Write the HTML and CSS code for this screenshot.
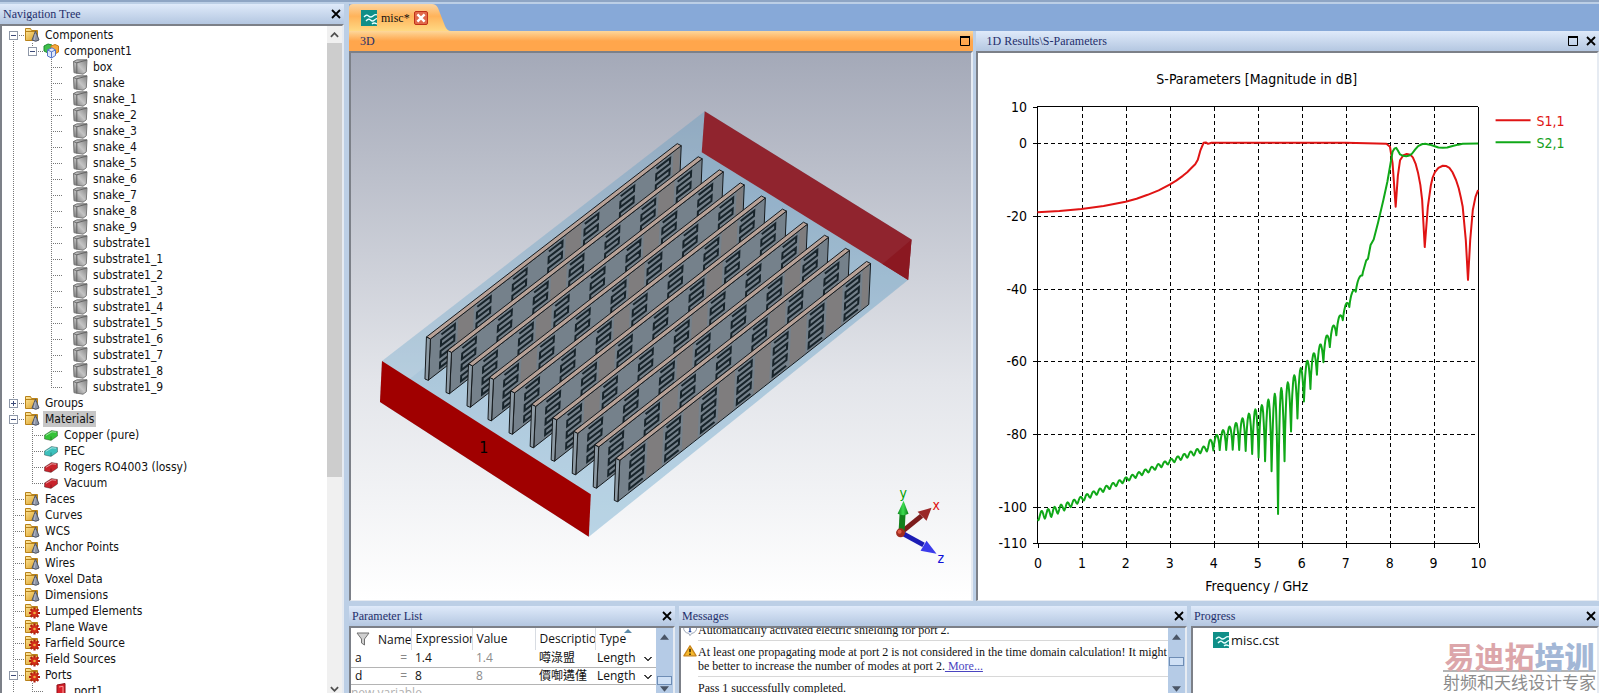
FILE: index.html
```html
<!DOCTYPE html>
<html lang="en">
  <head>
    <meta charset="UTF-8" />
    <meta name="viewport" content="width=device-width, initial-scale=1.0" />
    <title>misc</title>
    <link rel="stylesheet" href="styles.css">
  </head>
  <body>
    <svg class="defs" aria-hidden="true">
      <defs>
        <linearGradient id="gFolder" x1="0" y1="0" x2="1" y2="1">
          <stop offset="0" stop-color="#ffe9a0" />
          <stop offset="1" stop-color="#d99a1c" />
        </linearGradient>
        <linearGradient id="gCube" x1="0" y1="1" x2="1" y2="0">
          <stop offset="0" stop-color="#6e6e6e" />
          <stop offset="0.5" stop-color="#c4c4c4" />
          <stop offset="1" stop-color="#808080" />
        </linearGradient>
        <linearGradient id="gGreen" x1="0" x2="1">
          <stop offset="0" stop-color="#0d8a1e" />
          <stop offset="0.5" stop-color="#3cdc50" />
          <stop offset="1" stop-color="#0a7a18" />
        </linearGradient>
        <symbol id="folder" viewBox="0 0 16 16">
          <path d="M1.500 13.500V1.500h5l1 2h6v10z" fill="url(#gFolder)" stroke="#b8821a" />
          <path d="M2 4.500h11" stroke="#b8821a" />
        </symbol>
        <symbol id="geo" viewBox="0 0 16 16">
          <use href="#folder" />
          <path d="M11.500 4L15 13Q12 15.500 8 13z" fill="#8b93a5" stroke="#4f5565" />
          <path d="M11.300 7l-1 6" stroke="#b5bac8" />
        </symbol>
        <symbol id="src" viewBox="0 0 16 16">
          <use href="#folder" />
          <g stroke="#b01c10" stroke-width="2.200">
            <path d="M10.500 4.500v11M5 10h11M6.600 6.100l7.800 7.800M14.400 6.100l-7.800 7.800" />
          </g>
          <circle cx="10.500" cy="10" r="3.400" fill="#d22c18" />
          <circle cx="10.500" cy="10" r="1.300" fill="#f0b040" />
        </symbol>
        <symbol id="cube" viewBox="0 0 16 16">
          <path d="M1.500 2.500L5 .8h10l-.7 12-3.300 2.400-9-1.500z" fill="url(#gCube)" stroke="#7a7a7a" />
          <path d="M1.500 2.500l3.300 1.300L15 1M4.800 3.800v10.700" fill="none" stroke="#666" />
        </symbol>
        <symbol id="comp" viewBox="0 0 16 16">
          <path d="M1 3l4-2 4 1v6l-4 2-4-2z" fill="#3fbf4a" stroke="#1d8a30" />
          <path d="M8 3l4-1.500L15.500 3v6L12 11 8 9.500z" fill="#f5a83a" stroke="#c87a18" />
          <path d="M4.500 7L9 4.800 12.500 7v5.500L8.500 15 4.500 13z" fill="#dfe8fa" stroke="#5575c8" />
          <path d="M4.500 7l4 1.800 4-1.800M8.500 8.800V15" fill="none" stroke="#5575c8" />
        </symbol>
        <symbol id="brick" viewBox="0 0 16 16">
          <path d="M1.500 8L8.500 3.500 14.500 4.500v4.500L8 13.500 1.500 12z" fill="currentColor" stroke="rgba(0,0,0,.3)" />
          <path d="M3 8.300L9 4.800l4 .4" fill="none" stroke="rgba(255,255,255,.55)" />
          <path d="M8 9.500V13" stroke="rgba(0,0,0,.3)" />
        </symbol>
        <symbol id="port" viewBox="0 0 16 16">
          <path d="M4 2l8-1.500V14L4 16z" fill="#d8202a" stroke="#8e1018" />
          <path d="M6 4l4-.7V12" fill="none" stroke="#ff9c98" />
        </symbol>
        <symbol id="wave" viewBox="0 0 16 16">
          <path d="M0 0h16v16H0z" fill="#0f8f88" />
          <path d="M3 7q2.500-3 4.500-1t4.500 0 4-1M5 11q2.500-3 4.500-1t4 0 3-1M11 14q2-2 5 0" fill="none" stroke="#e8ffff" stroke-width="1.300" />
        </symbol>
        <symbol id="close" viewBox="0 0 10 10">
          <path d="M1 1l8 8M9 1L1 9" stroke="#000" stroke-width="1.800" />
        </symbol>
        <symbol id="max" viewBox="0 0 10 10">
          <path d="M.5.500h9v9h-9z" fill="none" stroke="#000" />
          <path d="M0 1h10" stroke="#000" stroke-width="2" />
        </symbol>
      </defs>
    </svg>

    <div class="app">
      <section class="panel nav">
        <header class="bar">
          <h2>Navigation Tree</h2>
          <button class="ctl" aria-label="Close"><svg><use href="#close" /></svg></button>
        </header>
        <div class="body nav-body">
          <ul class="tree" id="tree"></ul>
          <div class="scroll gray">
            <button aria-label="Scroll up"><svg viewBox="0 0 10 6"><path d="M1 5l4-4 4 4" /></svg></button>
            <span class="thumb"></span>
            <button aria-label="Scroll down"><svg viewBox="0 0 10 6"><path d="M1 1l4 4 4-4" /></svg></button>
          </div>
        </div>
      </section>

      <main class="work">
        <div class="tabs">
          <div class="tab">
            <svg class="ic"><use href="#wave" /></svg>
            <span>misc*</span>
            <button class="tab-close" aria-label="Close misc"><svg viewBox="0 0 10 10"><path d="M2 2l6 6M8 2L2 8" /></svg></button>
          </div>
        </div>

        <div class="views">
          <section class="panel">
            <header class="bar active">
              <h2>3D</h2>
              <button class="ctl" aria-label="Maximize"><svg><use href="#max" /></svg></button>
            </header>
            <div class="body view3d">
              <svg id="scene" viewBox="351 53 620 547">
                <path fill="#3e91c0" fill-opacity=".27" d="M705 111L912 239.500 908.600 280 589 537 380 402 382 361z" />
                <path fill="#3e91c0" fill-opacity=".08" d="M702 152L908 280 589 537 380 402z" />
                <path fill="#90242e" d="M705 111L912 239.500 908.600 280 702 152z" />
                <path fill="#8b1821" d="M912 239.500L908.600 280 883 264z" />
                <g id="slabs"></g>
                <path fill="#a00000" d="M382 361L591 494.500 589 537 380 402z" />
                <text class="port-no" x="479" y="453">1</text>
                <g class="triad">
                  <path d="M901 533L922 516" stroke="#7c1c1c" stroke-width="5" />
                  <path d="M932 508l-5 13-9-9z" fill="#9a2828" />
                  <path d="M902 533l22 12" stroke="#1c1cb4" stroke-width="5" />
                  <path d="M937 554l-16-3 6-10z" fill="#3b3bea" />
                  <path d="M902 532l1-18" stroke="#12801c" stroke-width="6" />
                  <path d="M904 501l5 13q-5 3-11 0z" fill="url(#gGreen)" />
                  <circle cx="901" cy="533" r="4.500" fill="#a02c20" />
                  <circle cx="900" cy="532" r="2" fill="#e05c48" />
                  <text x="900" y="498" fill="#00a000">y</text>
                  <text x="933" y="510" fill="#e01010">x</text>
                  <text x="938" y="563" fill="#1010d8">z</text>
                </g>
              </svg>
            </div>
          </section>

          <section class="panel">
            <header class="bar">
              <h2>1D Results\S-Parameters</h2>
              <button class="ctl" aria-label="Maximize"><svg><use href="#max" /></svg></button>
              <button class="ctl" aria-label="Close"><svg><use href="#close" /></svg></button>
            </header>
            <div class="body">
              <svg id="chart" viewBox="978 53 620 547">
                <text class="mid" x="1257" y="84">S-Parameters [Magnitude in dB]</text>
                <g id="grid"></g>
                <path id="s11" class="curve red" />
                <path id="s21" class="curve green" />
                <text class="mid" x="1257" y="591">Frequency / GHz</text>
                <path class="curve red" d="M1496 120h35" />
                <text x="1537" y="126" fill="#e01414">S1,1</text>
                <path class="curve green" d="M1496 142h35" />
                <text x="1537" y="148" fill="#14a01c">S2,1</text>
              </svg>
            </div>
          </section>
        </div>

        <div class="docks">
          <section class="panel params">
            <header class="bar">
              <h2>Parameter List</h2>
              <button class="ctl" aria-label="Close"><svg><use href="#close" /></svg></button>
            </header>
            <div class="body row-body">
              <table>
                <thead>
                  <tr>
                    <th class="c-name"><svg class="ic" viewBox="0 0 16 16"><path d="M2 2h12L9.500 8v6l-3-2V8z" fill="#d0d0d0" stroke="#707070" /></svg>Name</th>
                    <th class="c-expr">Expression</th>
                    <th class="c-val">Value</th>
                    <th class="c-desc">Description</th>
                    <th class="c-type">Type<svg class="sort" viewBox="0 0 8 4"><path d="M0 4l4-4 4 4z" fill="#5d8aa8" /></svg></th>
                  </tr>
                </thead>
                <tbody>
                  <tr>
                    <td>a<i>=</i></td>
                    <td>1.4</td>
                    <td class="dim">1.4</td>
                    <td>噂淥盟</td>
                    <td><select aria-label="Type of a"><option>Length</option></select></td>
                  </tr>
                  <tr>
                    <td>d<i>=</i></td>
                    <td>8</td>
                    <td class="dim">8</td>
                    <td>價啣遘僅</td>
                    <td><select aria-label="Type of d"><option>Length</option></select></td>
                  </tr>
                  <tr>
                    <td class="new" colspan="5">new variable</td>
                  </tr>
                </tbody>
              </table>
              <div class="scroll blue">
                <button aria-label="Scroll up"><svg viewBox="0 0 10 6"><path d="M0 6l5-6 5 6z" /></svg></button>
                <span class="thumb"></span>
                <button aria-label="Scroll down"><svg viewBox="0 0 10 6"><path d="M0 0l5 6 5-6z" /></svg></button>
              </div>
            </div>
          </section>

          <section class="panel messages">
            <header class="bar">
              <h2>Messages</h2>
              <button class="ctl" aria-label="Close"><svg><use href="#close" /></svg></button>
            </header>
            <div class="body row-body">
              <ul class="log">
                <li>
                  <svg class="ic" viewBox="0 0 16 16"><path d="M8 1a6.500 6 0 0 1 2 12l-2 2.500L6.500 13A6.500 6 0 0 1 8 1z" fill="#fff" stroke="#8a96a8" /><path d="M8 6v5M6.500 11h3M8 3v1.500" stroke="#2c4ea0" stroke-width="1.600" /></svg>
                  <p>Automatically activated electric shielding for port 2.</p>
                </li>
                <li>
                  <svg class="ic" viewBox="0 0 16 16"><path d="M8 2L15 13.500H1z" fill="#f6b92c" stroke="#c8841a" stroke-linejoin="round" stroke-width="1.500" /><path d="M8 5.500v4M8 10.800v1.700" stroke="#3a2800" stroke-width="1.800" /></svg>
                  <p>At least one propagating mode at port 2 is not considered in the time domain calculation! It might be better to increase the number of modes at port 2.<a href="#"> More...</a></p>
                </li>
                <li>
                  <span class="ic"></span>
                  <p>Pass 1 successfully completed.</p>
                </li>
              </ul>
              <div class="scroll blue">
                <button aria-label="Scroll up"><svg viewBox="0 0 10 6"><path d="M0 6l5-6 5 6z" /></svg></button>
                <span class="thumb"></span>
                <button aria-label="Scroll down"><svg viewBox="0 0 10 6"><path d="M0 0l5 6 5-6z" /></svg></button>
              </div>
            </div>
          </section>

          <section class="panel progress">
            <header class="bar">
              <h2>Progress</h2>
              <button class="ctl" aria-label="Close"><svg><use href="#close" /></svg></button>
            </header>
            <div class="body row-body">
              <p class="job"><svg class="ic"><use href="#wave" /></svg>misc.cst</p>
              <div class="brand">
                <p class="brand-top">易迪拓<b>培训</b></p>
                <p class="brand-sub">射频和天线设计专家</p>
              </div>
            </div>
          </section>
        </div>
      </main>
    </div>

    <script src="script.js"></script>
  </body>
</html>
```

FILE: styles.css
```css
:root {
  --frame: #bccfe6;
  --title: #1f2f6b;
  --ui: "DejaVu Sans Condensed", "DejaVu Sans", sans-serif;
  --serif: "Liberation Serif", serif;
  --table: "Open Sans", "Noto Sans CJK TC", sans-serif;
}

* {
  box-sizing: border-box;
}

body {
  margin: 0;
  height: 100vh;
  overflow: hidden;
  background: var(--frame);
  font-family: var(--ui);
  font-size: 12px;
  color: #111;
}

h2,
p,
ul {
  margin: 0;
  padding: 0;
  font-weight: normal;
  list-style: none;
}

button {
  padding: 0;
  border: 0;
  background: none;
  cursor: pointer;
}

.defs {
  display: block;
  width: 0;
  height: 0;
}

.ic {
  width: 16px;
  height: 16px;
  flex: none;
}

.app {
  display: flex;
  height: 100%;
  border-top: 2px solid #8ea5c4;
}

.panel {
  display: flex;
  flex-direction: column;
  min-width: 0;
  min-height: 0;
}

.bar {
  display: flex;
  align-items: center;
  gap: 8px;
  height: 20px;
  flex: none;
  padding: 0 3px;
  background: linear-gradient(#dfeafa, #b4c7e1);
}

.bar.active {
  background: linear-gradient(#fdd79a, #ffa64c 50%, #ffa64c);
}

.bar h2 {
  flex: 1;
  font: 12px/16px var(--serif);
  color: var(--title);
}

.ctl,
.ctl svg {
  display: block;
  width: 10px;
  height: 10px;
}

.body {
  flex: 1;
  min-height: 0;
  overflow: hidden;
  background: #fff;
  border: 2px solid #7c8088;
  border-width: 2px 2px 1px 2px;
  border-right-color: #e6ebf2;
  border-bottom-color: #e6ebf2;
}

.row-body {
  display: flex;
  border-bottom: 0;
}

/* navigation tree */

.nav {
  width: 344px;
  flex: none;
  padding-top: 2px;
}

.nav .body {
  display: flex;
  border-bottom: 0;
}

.tree {
  flex: 1;
  overflow: hidden;
  padding-top: 1px;
}

.tree li {
  background: repeating-linear-gradient(#777 0 1px, transparent 1px 2px) 11px 0 / 1px 100% no-repeat;
}

.tree > li:first-child {
  background-position: 11px 8px;
}

.tree ul li:last-child {
  background-size: 1px 8px;
}

.tree ul {
  padding-left: 19px;
}

.tree .row {
  display: flex;
  align-items: center;
  height: 16px;
  padding-left: 22px;
  background: repeating-linear-gradient(90deg, #777 0 1px, transparent 1px 2px) 11px 8px / 11px 1px no-repeat;
}

.tree .deep {
  padding-left: 32px;
}

.tree .row span {
  margin-left: 3px;
  padding: 0 2px;
  line-height: 16px;
  white-space: nowrap;
}

.tree .sel span {
  background: #c6c6c6;
}

.toggle {
  width: 9px;
  height: 9px;
  margin: 0 6px 0 -15px;
  border: 1px solid #8f98a8;
  background: linear-gradient(#3c4a78, #3c4a78) center / 5px 1px no-repeat #fff;
}

.toggle.plus {
  background: linear-gradient(#3c4a78, #3c4a78) center / 5px 1px no-repeat, linear-gradient(#3c4a78, #3c4a78) center / 1px 5px no-repeat, #fff;
}

.green-brick {
  color: #35c238;
}

.cyan-brick {
  color: #3cc0bc;
}

.red-brick {
  color: #c8232b;
}

/* scroll bars */

.scroll {
  display: flex;
  flex-direction: column;
  flex: none;
}

.scroll button {
  height: 17px;
  flex: none;
}

.scroll svg {
  display: block;
  width: 9px;
  height: 6px;
  margin: auto;
}

.gray {
  width: 15px;
  background: #f0f0f0;
}

.gray path {
  fill: none;
  stroke: #505050;
  stroke-width: 2;
}

.gray .thumb {
  height: 65%;
  margin-bottom: auto;
  background: #cdcdcd;
}

.scroll button:last-child {
  height: 8px;
}

.blue {
  width: 17px;
  background: #b5cbe6;
}

.blue path {
  fill: #4a5566;
}

.blue .thumb {
  height: 9px;
  margin: auto 1px 0;
  border: 1px solid #6e8db5;
  background: #cfe0f5;
}

.messages .thumb {
  margin: 12px 1px auto;
}

/* documents */

.work {
  flex: 1;
  min-width: 0;
  display: flex;
  flex-direction: column;
  padding-left: 5px;
}

.tabs {
  flex: none;
  height: 29px;
  background: #87a9d8;
  border-top: 2px solid var(--frame);
}

.tab {
  display: flex;
  align-items: center;
  gap: 4px;
  width: 102px;
  height: 27px;
  padding-left: 12px;
  background: linear-gradient(#fbd5a2, #ffb35a 45%, #ffd984);
  clip-path: path("M0 27V4Q0 0 4 0H83Q87 0 89 4L96 22Q98 27 102 27z");
  font: 12px/16px var(--serif);
}

.tab-close {
  width: 14px;
  height: 14px;
  border: 1px solid #c03018;
  border-radius: 2px;
  background: #e0694a;
}

.tab-close svg {
  display: block;
}

.tab-close path {
  stroke: #fff;
  stroke-width: 2;
}

.views {
  flex: 1;
  min-height: 0;
  display: grid;
  grid-template-columns: 1fr 1fr;
  gap: 3px;
}

.views .bar {
  padding-left: 11px;
}

.view3d {
  background: linear-gradient(#a4a9b8, #e3e5ea 60%, #fff);
}

#scene,
#chart {
  display: block;
  width: 100%;
  height: 100%;
}

.port-no {
  font: 15px "DejaVu Sans Mono", monospace;
}

.triad text {
  font: 14px var(--ui);
}

#slabs path {
  stroke: #15191c;
  stroke-linejoin: round;
}

#slabs .top {
  fill: #b8a298;
}

#slabs .end {
  fill: #8e9ba5;
}

#slabs .side {
  fill: #75818b;
}

#slabs .warm {
  fill: #7f7d7e;
  stroke: none;
}

#slabs .snake {
  fill: none;
  stroke: #18242b;
  stroke-width: 2;
  stroke-linejoin: miter;
}

#chart text {
  font: 14px var(--ui);
}

#chart .mid {
  text-anchor: middle;
}

#chart .end {
  text-anchor: end;
}

.axis {
  fill: none;
  stroke: #000;
  stroke-width: 1;
  shape-rendering: crispEdges;
}

.dash {
  stroke-dasharray: 4 3;
}

.curve {
  fill: none;
  stroke-width: 2;
  stroke-linejoin: round;
}

.curve.red {
  stroke: #e01414;
}

.curve.green {
  stroke: #10a818;
}

/* bottom docks */

.docks {
  display: flex;
  gap: 4px;
  height: 92px;
  flex: none;
  padding-top: 5px;
}

.params {
  width: 326px;
  flex: none;
}

.messages {
  width: 508px;
  flex: none;
}

.progress {
  flex: 1;
}

table {
  width: calc(100% - 17px);
  table-layout: fixed;
  border-collapse: collapse;
  font: 12px/16px var(--table);
  align-self: flex-start;
}

th {
  position: relative;
  height: 22px;
  padding: 0 4px;
  overflow: hidden;
  white-space: nowrap;
  text-align: left;
  font-weight: normal;
  border-right: 1px solid #d8dce2;
}

th:last-child {
  border-right: 0;
}

th .ic {
  margin: 0 7px 0 0;
  vertical-align: -3px;
}

.sort {
  position: absolute;
  top: 1px;
  left: 28px;
  width: 8px;
  height: 4px;
}

td {
  height: 17px;
  padding: 0 4px;
  line-height: 16px;
  white-space: nowrap;
  border-bottom: 1px solid #b4b4b4;
}

td:last-child {
  padding: 0 4px 0 2px;
}

td i {
  float: right;
  font-style: normal;
  color: #888;
}

.dim {
  color: #8c8c8c;
}

td.new {
  padding: 0;
  color: #b0b0b0;
}

.c-name {
  width: 60px;
}

.c-expr {
  width: 61px;
}

.c-val {
  width: 63px;
}

.c-desc {
  width: 60px;
}

select {
  display: block;
  width: 100%;
  height: 16px;
  padding: 0;
  border: 0;
  appearance: none;
  font: inherit;
  color: inherit;
  background:
    linear-gradient(45deg, transparent 40%, #444 40% 65%, transparent 65%) right 4px top 7px / 4px 4px no-repeat,
    linear-gradient(-45deg, transparent 40%, #444 40% 65%, transparent 65%) right 0 top 7px / 4px 4px no-repeat;
}

.log {
  flex: 1;
  overflow: hidden;
  padding: 0 0 4px 2px;
  display: flex;
  flex-direction: column;
  justify-content: center;
  font: 12px/14px var(--serif);
}

.log li {
  display: flex;
  gap: 1px;
}

.log p {
  flex: 1;
  padding: 4px 0 3px;
  border-bottom: 1px solid #d8d8d8;
}

.log .ic {
  width: 14px;
  height: 14px;
  margin-top: 3px;
}

.log a {
  color: #4a45c0;
}

.job {
  display: flex;
  align-items: center;
  gap: 2px;
  align-self: flex-start;
  padding: 4px 0 0 20px;
  font: 13px/16px var(--table);
}

.brand {
  margin: 12px 1px 0 auto;
  text-align: center;
  font-family: "Noto Sans CJK SC", sans-serif;
}

.brand-top {
  font-size: 30px;
  line-height: 30px;
  font-weight: bold;
  color: #dca6aa;
  border-bottom: 2px solid #b4b4b4;
}

.brand-top b {
  color: #a3b7d6;
}

.brand-sub {
  font-size: 17px;
  line-height: 20px;
  color: #8c8c8c;
}
```

FILE: script.js
```js
// navigation tree: [icon, label, children, row class]
const many = (name) =>
  [name].concat([1, 2, 3, 4, 5, 6, 7, 8, 9].map((i) => `${name}_${i}`));

const parts = ["box", ...many("snake"), ...many("substrate1")].map((n) => [
  "cube",
  n,
  null,
  "deep",
]);

const nodes = [
  ["geo", "Components", [["comp", "component1", parts]]],
  ["geo", "Groups", []],
  [
    "geo",
    "Materials",
    [
      ["brick", "Copper (pure)", null, "green-brick"],
      ["brick", "PEC", null, "cyan-brick"],
      ["brick", "Rogers RO4003 (lossy)", null, "red-brick"],
      ["brick", "Vacuum", null, "red-brick"],
    ],
    "sel",
  ],
  ["geo", "Faces"],
  ["geo", "Curves"],
  ["geo", "WCS"],
  ["geo", "Anchor Points"],
  ["geo", "Wires"],
  ["geo", "Voxel Data"],
  ["geo", "Dimensions"],
  ["src", "Lumped Elements"],
  ["src", "Plane Wave"],
  ["src", "Farfield Source"],
  ["src", "Field Sources"],
  ["src", "Ports", [["port", "port1", null, "deep"]]],
];

function renderNode([icon, label, children, cls = ""]) {
  const rowCls = cls.includes("brick") ? "" : cls;
  const icCls = cls.includes("brick") ? cls : "";
  let toggle = "";
  if (children) {
    toggle = `<button class="toggle ${children.length ? "" : "plus"}" aria-label="Toggle ${label}"></button>`;
  }
  const sub =
    children && children.length
      ? `<ul>${children.map(renderNode).join("")}</ul>`
      : "";
  return `<li><div class="row ${rowCls}">${toggle}<svg class="ic ${icCls}"><use href="#${icon}"/></svg><span>${label}</span></div>${sub}</li>`;
}

document.getElementById("tree").innerHTML = nodes.map(renderNode).join("");

// 3D model: ten substrate boards, seven snakes on each
const pt = (x, y) => `${x.toFixed(1)} ${y.toFixed(1)}`;

function slab(i) {
  const fx = 430.5 + i * 21.05;
  const fy = 339 + i * 13.5;
  const bx = 681.5 + i * 21.05;
  const by = 145.5 + i * 13.1;
  // u runs along the board, v down its height
  const at = (u, v) =>
    pt(fx + (bx - fx) * u - 1.8 * v, fy + (by - fy) * u + 41 * v);

  let out = `<path class="side" d="M${at(0, 0)}L${at(1, 0)} ${at(1, 1)} ${at(0, 1)}z"/>`;
  for (let k = 0; k < 7; k++) {
    const u = 0.0714 + k * 0.143;
    if (i === 9 || (i + k) % 3 === 0) {
      const a = u + 0.04;
      const b = Math.min(u + 0.103, 0.995);
      out += `<path class="warm" d="M${at(a, 0.02)}L${at(b, 0.02)} ${at(b, 0.98)} ${at(a, 0.98)}z"/>`;
    }
    const l = u - 0.027;
    const r = u + 0.027;
    let d = `M${at(l, 0.1)}`;
    for (let n = 0; n < 7; n++) {
      const v = 0.1 + n * 0.135;
      d += n % 2 ? `L${at(r, v)} ${at(l, v)}` : `L${at(l, v)} ${at(r, v)}`;
    }
    out += `<path class="snake" d="${d}"/>`;
  }
  out += `<path class="top" d="M${pt(fx, fy)}L${pt(bx, by)} ${pt(bx - 4, by - 2)} ${pt(fx - 4, fy - 2)}z"/>`;
  out += `<path class="end" d="M${pt(fx, fy)}l-4 -2 -1.500 42 3.500 1.500z"/>`;
  return out;
}

let slabs = "";
for (let i = 0; i < 10; i++) slabs += slab(i);
document.getElementById("slabs").innerHTML = slabs;

// S-parameter plot
const X = (f) => 1037.5 + f * 44.1;
const Y = (db) => 143 - db * 3.638;

let grid = "";
for (let f = 0; f <= 10; f++) {
  const x = Math.round(X(f));
  if (f > 0 && f < 10) grid += `<path class="axis dash" d="M${x}.5 107V543"/>`;
  grid += `<path class="axis" d="M${x}.5 543v5"/>`;
  grid += `<text class="mid" x="${x}" y="568">${f}</text>`;
}
[10, 0, -20, -40, -60, -80, -100, -110].forEach((db) => {
  const y = Math.round(Y(db));
  if (db < 10 && db > -110) grid += `<path class="axis dash" d="M1037 ${y}.5H1478"/>`;
  grid += `<path class="axis" d="M1033 ${y}.5h5"/>`;
  grid += `<text class="end" x="1027" y="${y + 5}">${db}</text>`;
});
grid += `<path class="axis" d="M1037.500 106.500h441v437h-441z"/>`;
document.getElementById("grid").innerHTML = grid;

const line = (pts) => "M" + pts.map(([f, db]) => pt(X(f), Y(db))).join("L");

const s11 = [
  [0, -19], [0.5, -18.7], [1, -18.1], [1.5, -17.3], [2, -16.1], [2.25, -15.3],
  [2.5, -14.2], [2.75, -13], [3, -11.4], [3.15, -10.3], [3.3, -9], [3.4, -8],
  [3.5, -6.8], [3.58, -5.8], [3.64, -4.6],
  [3.7, -1.9], [3.77, 0.1], [3.82, 0.2], [3.87, -0.2], [3.95, 0.1], [7, 0.1],
  [7.7, -0.1], [7.92, -0.2], [8, -1], [8.06, -5.5], [8.13, -17.5], [8.18, -9],
  [8.23, -4.7], [8.3, -3.4], [8.38, -3], [8.46, -3.2], [8.52, -3.9], [8.58, -5.6],
  [8.64, -8.3], [8.69, -11.5], [8.73, -15.6], [8.79, -28.6], [8.86, -17.5],
  [8.93, -11.5], [8.97, -9.4], [9.02, -8], [9.1, -6.8], [9.2, -6.2],
  [9.28, -6.3], [9.35, -6.8], [9.42, -8], [9.5, -10.2], [9.56, -12.4],
  [9.61, -15], [9.65, -17.5], [9.72, -26.7], [9.77, -37.6],
  [9.82, -26.7], [9.88, -18.4], [9.94, -14.8], [10, -12.9],
];

// S2,1 ripples between an upper and a lower envelope up to 7.4 GHz
const upper = [
  [0, -101.5], [0.2, -100.8], [0.65, -99], [2, -92], [3, -87], [3.8, -83.3],
  [3.92, -81.6], [4.2, -79], [4.5, -77], [4.8, -74.4], [5.1, -72],
  [5.38, -69], [5.68, -65.8], [5.98, -61.8], [6.27, -57.8], [6.56, -53],
  [6.86, -47.5], [7, -44.3], [7.15, -40.9], [7.4, -34.5],
];
const lower = [
  [0, -103.8], [0.3, -102.9], [0.7, -100.5], [1, -98.6], [2, -93.2],
  [3, -88.2], [3.8, -84.9], [4, -84.5], [4.5, -84.3], [4.75, -84.7],
  [5.02, -86.5], [5.165, -87.5], [5.31, -90], [5.46, -102], [5.61, -87.2],
  [5.76, -79], [5.9, -75.8], [6.05, -71], [6.2, -67.5], [6.35, -63.5],
  [6.5, -60], [6.64, -56], [6.8, -52.5], [6.93, -48.7], [7.08, -45],
  [7.22, -41], [7.4, -35.5],
];

function interp(tab, f) {
  for (let i = 1; i < tab.length; i++) {
    if (f <= tab[i][0]) {
      const [a, va] = tab[i - 1];
      const [b, vb] = tab[i];
      return va + ((vb - va) * (f - a)) / (b - a);
    }
  }
  return tab[tab.length - 1][1];
}

const s21 = [];
for (let n = -371; n <= 131; n++) {
  const f = 5.46 + (n * 0.147) / 10;
  const sharp = f < 3.9 ? 1.6 : 0.8;
  const w = Math.pow(Math.abs(Math.sin((Math.PI * n) / 10)), sharp);
  const lo = interp(lower, f);
  s21.push([f, lo + (interp(upper, f) - lo) * w]);
}
s21.push(
  [7.46, -32.3], [7.5, -31.8], [7.56, -28], [7.63, -26.5], [7.73, -21.8],
  [7.85, -15.6], [7.94, -10.6], [8, -6.5], [8.06, -2.4], [8.1, -1.5],
  [8.14, -1.3], [8.18, -2], [8.23, -3.1], [8.3, -3.5], [8.37, -3.6],
  [8.44, -3.4], [8.5, -2.9], [8.57, -1.8], [8.64, -0.8], [8.72, -0.3],
  [8.8, -0.2], [8.9, -0.4], [9, -0.8], [9.1, -1.2], [9.2, -1.3], [9.3, -1.2],
  [9.42, -0.8], [9.55, -0.4], [9.65, -0.2], [10, -0.1]
);

document.getElementById("s11").setAttribute("d", line(s11));
document.getElementById("s21").setAttribute("d", line(s21));
```
